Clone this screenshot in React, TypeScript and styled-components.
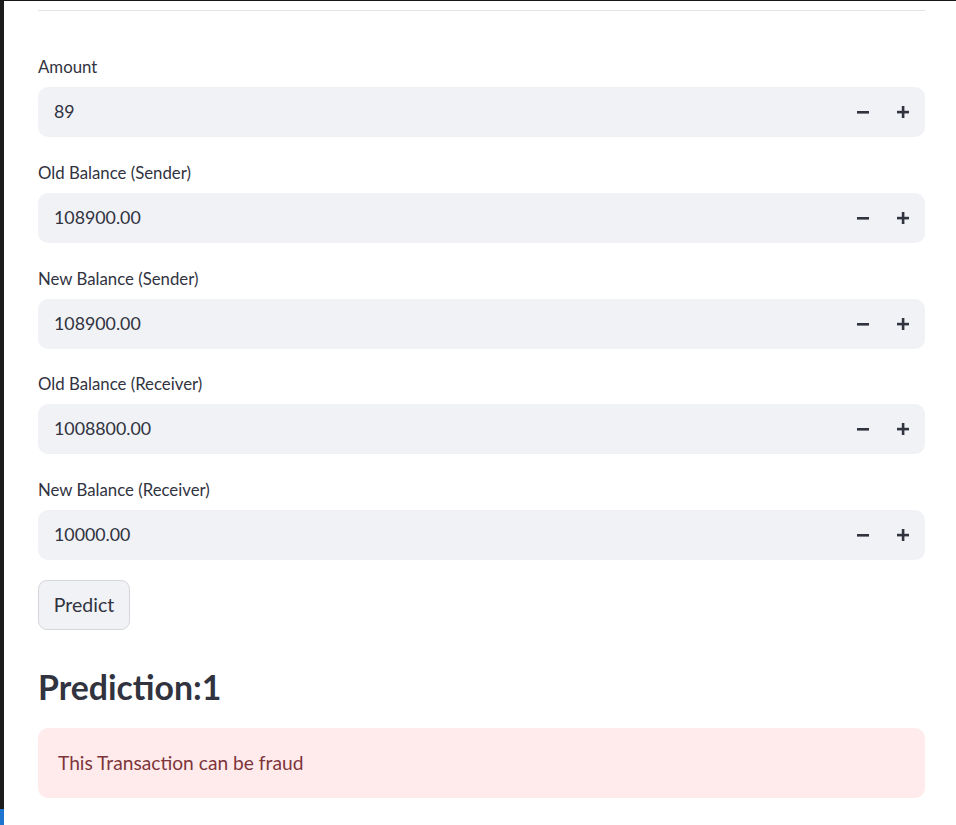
import React from "react";
import styled, { createGlobalStyle } from "styled-components";

const Global = createGlobalStyle`
  html, body { margin: 0; padding: 0; background: #ffffff; }
  #root { min-height: 100vh; }
  * { box-sizing: border-box; }
`;

const Frame = styled.div`
  display: flex;
  min-height: 100vh;
  border-top: 1px solid #161616;
  font-family: "Lato", "Noto Sans", sans-serif;
  color: #31333f;
`;

const EdgeStrip = styled.div`
  width: 4px;
  flex: none;
  background: linear-gradient(to bottom, #1c1c1c calc(100% - 16px), #1f74d0 calc(100% - 16px));
`;

const Main = styled.main`
  flex: 1;
  padding: 9px 31px 0 34px;
  display: flex;
  flex-direction: column;
`;

const Divider = styled.hr`
  margin: 0;
  border: none;
  height: 1px;
  background: #e3e3e6;
`;

const Form = styled.div`
  margin-top: 45px;
  display: flex;
  flex-direction: column;
  gap: 24.75px;
`;

const Field = styled.div`
  display: flex;
  flex-direction: column;
`;

const Label = styled.label`
  font-size: 16.8px;
  line-height: 22px;
  margin-bottom: 9px;
  color: #31333f;
`;

const InputBox = styled.div`
  height: 50px;
  border-radius: 10px;
  background: #f0f2f6;
  display: flex;
  align-items: center;
`;

const Value = styled.span`
  flex: 1;
  padding-left: 16px;
  padding-bottom: 2px;
  font-size: 17.8px;
  color: #31333f;
`;

const StepButton = styled.span`
  width: 40px;
  height: 50px;
  display: flex;
  align-items: center;
  justify-content: center;
  color: #31333f;
`;

const Steps = styled.div`
  display: flex;
  margin-right: 2px;
`;

const Button = styled.button`
  margin-top: 20px;
  align-self: flex-start;
  width: 92px;
  height: 50px;
  border-radius: 9px;
  border: 1px solid #d5d6da;
  background: #f0f2f6;
  font-family: inherit;
  font-size: 19.5px;
  color: #31333f;
  padding: 0 0 2px;
`;

const Heading = styled.h3`
  margin: 35px 0 0;
  font-size: 33.8px;
  line-height: 44px;
  font-weight: 700;
  color: #31333f;
`;

const Alert = styled.div`
  margin-top: 19px;
  height: 70px;
  border-radius: 10px;
  background: #ffebeb;
  color: #7d353b;
  font-size: 19.2px;
  display: flex;
  align-items: center;
  padding-left: 20px;
  padding-bottom: 2px;
`;

const Minus = () => (
  <svg width="12" height="12" viewBox="0 0 12 12">
    <rect x="0" y="5" width="12" height="2.6" fill="currentColor" />
  </svg>
);

const Plus = () => (
  <svg width="12" height="12" viewBox="0 0 12 12">
    <rect x="0" y="4.8" width="12" height="2.6" fill="currentColor" />
    <rect x="4.8" y="0" width="2.6" height="12" fill="currentColor" />
  </svg>
);

const fields = [
  { label: "Amount", value: "89" },
  { label: "Old Balance (Sender)", value: "108900.00" },
  { label: "New Balance (Sender)", value: "108900.00" },
  { label: "Old Balance (Receiver)", value: "1008800.00" },
  { label: "New Balance (Receiver)", value: "10000.00" },
];

export default function App() {
  return (
    <>
      <Global />
      <Frame>
        <EdgeStrip />
        <Main>
          <Divider />
          <Form>
            {fields.map((f) => (
              <Field key={f.label}>
                <Label>{f.label}</Label>
                <InputBox>
                  <Value>{f.value}</Value>
                  <Steps>
                    <StepButton><Minus /></StepButton>
                    <StepButton><Plus /></StepButton>
                  </Steps>
                </InputBox>
              </Field>
            ))}
          </Form>
          <Button>Predict</Button>
          <Heading>Prediction:1</Heading>
          <Alert>This Transaction can be fraud</Alert>
        </Main>
      </Frame>
    </>
  );
}
